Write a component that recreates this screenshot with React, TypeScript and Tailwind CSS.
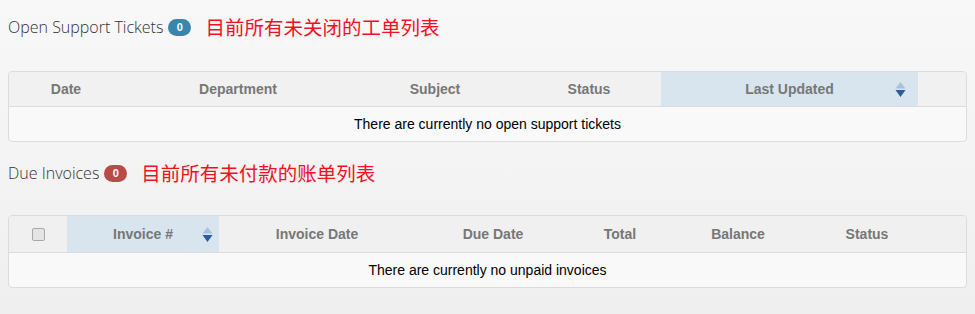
const sans = { fontFamily: 'Arial, "Liberation Sans", sans-serif' }

function SortIcon() {
  return (
    <svg width="11" height="17" viewBox="0 0 11 17" className="shrink-0">
      <path d="M5.5 1 L10.5 7.5 L0.5 7.5 Z" fill="#a9c2dc" />
      <path d="M0.5 9 L10.5 9 L5.5 16 Z" fill="#2a5ba3" />
    </svg>
  )
}

function Badge({ color, n }: { color: string; n: number }) {
  return (
    <span
      className={`ml-[5px] inline-flex h-[17px] w-[23px] items-center justify-center rounded-full text-[11px] font-bold text-white ${color}`}
      style={sans}
    >
      {n}
    </span>
  )
}

function Heading({ title, badge, note }: { title: string; badge: React.ReactNode; note: string }) {
  return (
    <div className="flex h-[24px] items-center">
      <span className="text-[16px] leading-none font-light text-[#333]" style={{ fontFamily: '"Open Sans", sans-serif' }}>
        {title}
      </span>
      {badge}
      <span
        className="ml-[14px] text-[19.5px] leading-none text-[#f2101e]"
        style={{ fontFamily: '"Noto Sans CJK SC", sans-serif' }}
      >
        {note}
      </span>
    </div>
  )
}

export default function App() {
  const th = 'flex items-center justify-center text-[14px] font-bold text-[#777]'
  return (
    <div className="h-[314px] w-full bg-gradient-to-b from-[#f8f8f8] to-[#efefef] px-2 pt-[15px]">
      <Heading title="Open Support Tickets" badge={<Badge color="bg-[#3a85ac]" n={0} />} note="目前所有未关闭的工单列表" />

      <div className="mt-[32px] overflow-hidden rounded border border-[#dcdcdc] bg-[#f9f9f9]" style={sans}>
        <div className="flex h-[35px] border-b border-[#dcdcdc] bg-[#f1f1f1]">
          <div className={`${th} w-[114px]`}>Date</div>
          <div className={`${th} w-[230px]`}>Department</div>
          <div className={`${th} w-[164px]`}>Subject</div>
          <div className={`${th} w-[144px]`}>Status</div>
          <div className={`${th} relative w-[257px] bg-[#d8e5ee]`}>
            Last Updated
            <span className="absolute right-[12px] top-[9px]"><SortIcon /></span>
          </div>
          <div className="flex-1" />
        </div>
        <div className="flex h-[34px] items-center justify-center text-[14px] text-black">
          There are currently no open support tickets
        </div>
      </div>

      <div className="mt-[19px]">
        <Heading title="Due Invoices" badge={<Badge color="bg-[#b94a48]" n={0} />} note="目前所有未付款的账单列表" />
      </div>

      <div className="mt-[30px] overflow-hidden rounded border border-[#dcdcdc] bg-[#f9f9f9]" style={sans}>
        <div className="flex h-[37px] border-b border-[#dcdcdc] bg-[#f0f0f0]">
          <div className="flex w-[58px] items-center justify-center">
            <span className="h-[13px] w-[13px] rounded-[2px] border border-[#a8a8a8] bg-[#e4e4e4]" />
          </div>
          <div className={`${th} relative w-[152px] bg-[#d8e5ee]`}>
            Invoice #
            <span className="absolute right-[6px] top-[10px]"><SortIcon /></span>
          </div>
          <div className={`${th} w-[196px]`}>Invoice Date</div>
          <div className={`${th} w-[156px]`}>Due Date</div>
          <div className={`${th} w-[98px]`}>Total</div>
          <div className={`${th} w-[138px]`}>Balance</div>
          <div className={`${th} w-[120px]`}>Status</div>
          <div className="flex-1" />
        </div>
        <div className="flex h-[34px] items-center justify-center text-[14px] text-black">
          There are currently no unpaid invoices
        </div>
      </div>
    </div>
  )
}
